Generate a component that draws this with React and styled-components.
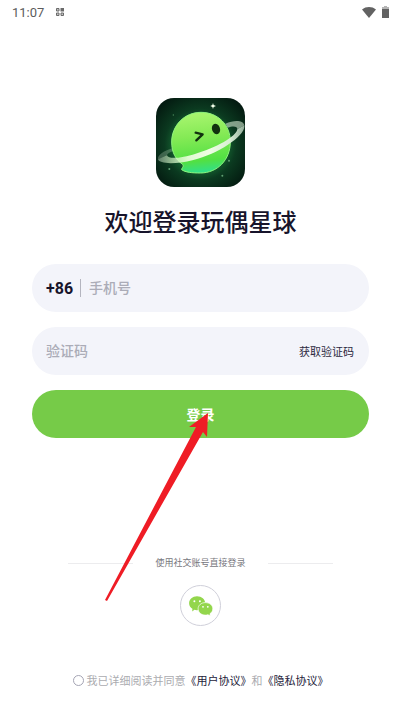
import React, { useState } from 'react';
import styled, { createGlobalStyle } from 'styled-components';


const GlobalStyle = createGlobalStyle`
    * {
        box-sizing: border-box;
    }
    body {
        margin: 0;
        background-color: #fff;
        color: #17142b;
        font-family: Roboto, "Noto Sans CJK SC", sans-serif;
    }
    button, input {
        font-family: inherit;
    }
`;

const Page = styled.div`
    min-height: 100vh;
    display: flex;
    flex-direction: column;
`;

const StatusBar = styled.header`
    height: 24px;
    padding: 0 12px;
    display: flex;
    align-items: center;
    justify-content: space-between;
    color: #5c5c5c;
    font-size: 13px;
`;

const StatusGroup = styled.div`
    display: flex;
    align-items: center;
    gap: ${props => props.$gap}px;
`;

const Main = styled.main`
    flex: 1;
    padding: 74px 32px 0;
    display: flex;
    flex-direction: column;
    align-items: center;
`;

const Logo = styled.svg`
    width: 89px;
    height: 89px;
    border-radius: 18px;
`;

const Title = styled.h1`
    margin: 18px 0 22px;
    font-size: 24px;
    line-height: 37px;
    font-weight: 500;
`;

const Form = styled.form`
    width: 100%;
    display: flex;
    flex-direction: column;
    gap: 15px;
`;

const Field = styled.div`
    height: 48px;
    padding: 0 15px 0 14px;
    display: flex;
    align-items: center;
    border-radius: 24px;
    background-color: #f3f4fa;
`;

const Prefix = styled.label`
    padding: 2px 7px 0 0;
    margin-right: 8px;
    border-right: solid 1px #b4b5bf;
    font-size: 16px;
    line-height: 16px;
    font-weight: 700;
`;

const TextInput = styled.input`
    flex: 1;
    min-width: 0;
    padding: 0;
    border: none;
    outline: none;
    background: none;
    color: inherit;
    font-size: 14px;
    font-weight: 500;
    &::placeholder {
        color: #abacb7;
        opacity: 1;
    }
`;

const CodeButton = styled.button`
    padding: 0;
    border: none;
    background: none;
    color: #2b2840;
    font-size: 11px;
    cursor: pointer;
`;

const SubmitArea = styled.div`
    position: relative;
`;

const SubmitButton = styled.button`
    width: 100%;
    height: 48px;
    border: none;
    border-radius: 24px;
    background-color: #76cb48;
    color: #fff;
    font-size: 14px;
    font-weight: 700;
    cursor: pointer;
`;

const Arrow = styled.svg`
    position: absolute;
    top: 22px;
    left: calc(50% - 96px);
    pointer-events: none;
`;

const Footer = styled.footer`
    padding: 0 16px 22px;
    display: flex;
    flex-direction: column;
    align-items: center;
`;

const Divider = styled.div`
    width: 100%;
    margin-bottom: 14px;
    display: flex;
    align-items: center;
    justify-content: center;
    gap: 22px;
    color: #77777d;
    font-size: 9px;
    line-height: 16px;
    &::before, &::after {
        content: "";
        width: 65px;
        height: 1px;
        background-color: #ececee;
    }
`;

const SocialButton = styled.button`
    width: 41px;
    height: 41px;
    margin-bottom: 47px;
    padding: 0;
    display: flex;
    align-items: center;
    justify-content: center;
    border: solid 1px #d0d0da;
    border-radius: 50%;
    background: none;
    cursor: pointer;
`;

const Agreement = styled.div`
    display: flex;
    align-items: center;
    color: #abacb0;
    font-size: 11px;
    line-height: 18px;
`;

const RoundCheck = styled.input`
    appearance: none;
    width: 11px;
    height: 11px;
    margin: 0 3px 4px 0;
    border: solid 1px #a4a4b4;
    border-radius: 50%;
    cursor: pointer;
    &:checked {
        border-color: #76cb48;
        background-color: #76cb48;
    }
`;

const DocLink = styled.a`
    color: #25223a;
    text-decoration: none;
`;

function AppLogo() {
    return(
        <Logo viewBox="18 18 267 267" role="img" aria-label="玩偶星球">
            <defs>
                <radialGradient id="sky" cx="50%" cy="52%" r="65%">
                    <stop offset="0.4" stopColor="#176b34"/>
                    <stop offset="0.62" stopColor="#0b3a20"/>
                    <stop offset="1" stopColor="#03170f"/>
                </radialGradient>
                <linearGradient id="planet" x1="0.4" y1="0" x2="0.5" y2="1">
                    <stop offset="0" stopColor="#a9f56f"/>
                    <stop offset="0.4" stopColor="#84ea55"/>
                    <stop offset="0.8" stopColor="#52e043"/>
                    <stop offset="1" stopColor="#2fe08e"/>
                </linearGradient>
                <linearGradient id="ring" x1="0" y1="0" x2="1" y2="0">
                    <stop offset="0" stopColor="#dff5dc" stopOpacity="0.4"/>
                    <stop offset="0.15" stopColor="#d9fac9" stopOpacity="0.65"/>
                    <stop offset="0.35" stopColor="#e6fcd9" stopOpacity="0.95"/>
                    <stop offset="0.6" stopColor="#effde3"/>
                    <stop offset="0.85" stopColor="#dcefd9" stopOpacity="0.95"/>
                    <stop offset="1" stopColor="#c0d8c3" stopOpacity="0.75"/>
                </linearGradient>
            </defs>
            <rect x="18" y="18" width="267" height="267" fill="url(#sky)"/>
            <path d="M68 169 C40 177 22 190 24 202 L51 190 C51 185 59 181 70 177 Z" fill="#dff5dc" opacity="0.25"/>
            <path d="M226 95 C253 84 279 84 283 100 L262 112 C263 103 250 101 233 107 Z" fill="#d3e8d1" opacity="0.6"/>
            <path d="M153 61 C204 61 241 99 241 149 C241 204 202 243 151 243 C126 243 106 241 95 233 C94 228 103 225 98 217 C77 203 65 181 65 150 C65 101 103 61 153 61 Z" fill="url(#planet)" stroke="#8ff37c" strokeWidth="3"/>
            <path d="M51 190 C56 203 95 198 137 185 C195 169 259 134 262 112 L283 100 C288 130 205 186 130 204 C75 218 28 216 24 202 Z" fill="url(#ring)"/>
            <path d="M137 122 L158 127 L139 145" fill="none" stroke="#12310f" strokeWidth="7" strokeLinecap="round" strokeLinejoin="round"/>
            <ellipse cx="198" cy="111" rx="12" ry="16" transform="rotate(-18 198 111)" fill="#12310f"/>
            <path d="M189 33 L191 39 L198 42 L191 45 L189 51 L187 45 L181 42 L187 39 Z" fill="#f1ffe9"/>
            <circle cx="70" cy="69" r="2" fill="#4b8b5e"/>
            <circle cx="58" cy="231" r="3" fill="#5f9f72"/>
            <circle cx="237" cy="206" r="3" fill="#5f9f72"/>
            <circle cx="217" cy="251" r="3" fill="#5f9f72"/>
        </Logo>
    );
}

function AppsIcon() {
    return(
        <svg width="8" height="8" viewBox="0 0 8 8" fill="#c4c4c4" stroke="#6a6a6a" aria-hidden="true">
            <path d="M0.5 0.5h2.5v2.5h-2.5zM0.5 5h2.5v2.5h-2.5zM5 5h2.5v2.5h-2.5z"/>
            <path d="M4.5 0H8v3.5H4.5z" fill="#6a6a6a" stroke="none"/>
        </svg>
    );
}

function WifiIcon() {
    return(
        <svg width="14" height="11" viewBox="0 0 14 11" fill="#626262" aria-hidden="true">
            <path d="M7 11 L0 2.5 C4 -0.8 10 -0.8 14 2.5 Z"/>
        </svg>
    );
}

function BatteryIcon() {
    return(
        <svg width="7" height="12" viewBox="0 0 7 12" aria-hidden="true">
            <path d="M2 0h3v1h2v3H0V1h2z" fill="#b5b5b5"/>
            <path d="M0 3h7v9H0z" fill="#626262"/>
        </svg>
    );
}

function WechatIcon() {
    return(
        <svg width="24" height="20" viewBox="0 0 24 20" aria-hidden="true">
            <path d="M8 0.3 C12.6 0.3 16.2 3.4 16.2 7.2 C16.2 11.2 12.6 14.2 8 14.2 C7 14.2 6.2 14.1 5.4 13.8 L3.2 15.4 L3.4 12.7 C1.4 11.5 0.1 9.5 0.1 7.2 C0.1 3.4 3.6 0.3 8 0.3 Z" fill="#93d64c"/>
            <path d="M16.4 6.6 C20.6 6.6 23.8 9.3 23.8 12.8 C23.8 14.8 22.7 16.6 21 17.7 L21.2 19.8 L18.9 18.7 C18.1 19 17.3 19.1 16.4 19.1 C12.2 19.1 9.1 16.2 9.1 12.8 C9.1 9.3 12.2 6.6 16.4 6.6 Z" fill="#93d64c" stroke="#fff" strokeWidth="0.7"/>
            <g fill="#fff">
                <circle cx="5.4" cy="5.2" r="1"/>
                <circle cx="10.9" cy="5.2" r="1"/>
                <circle cx="14" cy="10.8" r="0.9"/>
                <circle cx="18.8" cy="10.8" r="0.9"/>
            </g>
        </svg>
    );
}

export default function App() {
    const [ phone, setPhone ] = useState('');
    const [ code, setCode ] = useState('');
    const [ agreed, setAgreed ] = useState(false);

    return(
        <Page>
            <GlobalStyle/>
            <StatusBar>
                <StatusGroup $gap={12}><span>11:07</span><AppsIcon/></StatusGroup>
                <StatusGroup $gap={6}><WifiIcon/><BatteryIcon/></StatusGroup>
            </StatusBar>
            <Main>
                <AppLogo/>
                <Title>欢迎登录玩偶星球</Title>
                <Form onSubmit={e => e.preventDefault()}>
                    <Field>
                        <Prefix htmlFor="phone">+86</Prefix>
                        <TextInput id="phone" type="tel" placeholder="手机号" value={phone} onChange={e => setPhone(e.target.value)}/>
                    </Field>
                    <Field>
                        <TextInput aria-label="验证码" placeholder="验证码" value={code} onChange={e => setCode(e.target.value)}/>
                        <CodeButton type="button">获取验证码</CodeButton>
                    </Field>
                    <SubmitArea>
                        <SubmitButton type="submit">登录</SubmitButton>
                        <Arrow width="105" height="190" viewBox="0 0 105 190" aria-hidden="true">
                            <path d="M103 1 L84 15 L91 15 L0 188 L2 189 L98 20 L102 25 Z" fill="#ef1c25"/>
                        </Arrow>
                    </SubmitArea>
                </Form>
            </Main>
            <Footer>
                <Divider>使用社交账号直接登录</Divider>
                <SocialButton type="button" aria-label="微信登录"><WechatIcon/></SocialButton>
                <Agreement>
                    <RoundCheck id="agree" type="checkbox" checked={agreed} onChange={() => setAgreed(!agreed)}/>
                    <label htmlFor="agree">我已详细阅读并同意</label>
                    <DocLink href="#terms">《用户协议》</DocLink>
                    和
                    <DocLink href="#privacy">《隐私协议》</DocLink>
                </Agreement>
            </Footer>
        </Page>
    );
}
